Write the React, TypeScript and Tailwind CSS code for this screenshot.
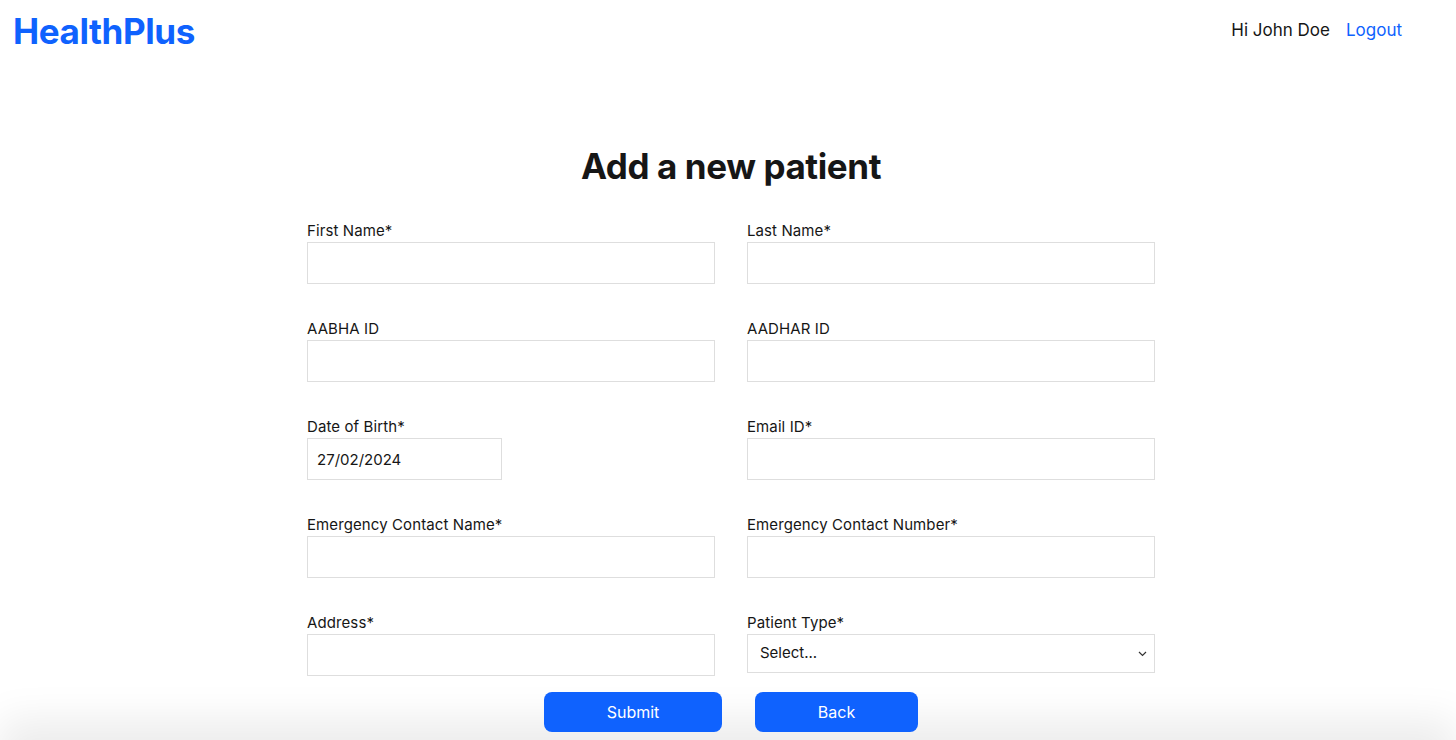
import { useState } from 'react';

const fields: { label: string; name: string }[][] = [
  [
    { label: 'First Name*', name: 'firstName' },
    { label: 'Last Name*', name: 'lastName' },
  ],
  [
    { label: 'AABHA ID', name: 'aabha' },
    { label: 'AADHAR ID', name: 'aadhar' },
  ],
];

function Field({ label, children }: { label: string; children: React.ReactNode }) {
  return (
    <div className="flex flex-col">
      <label className="text-[15px] leading-5 pt-[1px] text-[#161616] tracking-[0.1px]">{label}</label>
      <div className="mt-[1px]">{children}</div>
    </div>
  );
}

const inputCls =
  'w-full h-[42px] border border-[#dedede] bg-white px-[9px] text-[15px] text-[#161616] outline-none';

export default function App() {
  const [dob, setDob] = useState('27/02/2024');

  return (
    <div className="min-h-screen bg-white font-['Inter',sans-serif] overflow-hidden">
      <header className="h-[62px] flex items-center justify-between pl-[13px] pr-[54px]">
        <span className="text-[35px] font-bold text-[#0f62fe] tracking-[-0.4px]">HealthPlus</span>
        <div className="flex items-center gap-4 text-[17px]">
          <span className="text-[#161616]">Hi John Doe</span>
          <a href="#" className="text-[#0f62fe]">Logout</a>
        </div>
      </header>

      <main className="pl-[6px] pt-[83px]">
        <h1 className="text-center text-[35px] leading-[42px] font-bold text-[#161616] tracking-[-0.4px]">
          Add a new patient
        </h1>

        <form className="mx-auto w-[848px] mt-[33px]" onSubmit={(e) => e.preventDefault()}>
          <div className="grid grid-cols-2 gap-x-8 gap-y-[34px]">
            {fields.flat().map((f) => (
              <Field key={f.name} label={f.label}>
                <input className={inputCls} name={f.name} />
              </Field>
            ))}

            <Field label="Date of Birth*">
              <input
                className={inputCls + ' !w-[195px]'}
                value={dob}
                onChange={(e) => setDob(e.target.value)}
              />
            </Field>
            <Field label="Email ID*">
              <input className={inputCls} name="email" />
            </Field>

            <Field label="Emergency Contact Name*">
              <input className={inputCls} name="ecName" />
            </Field>
            <Field label="Emergency Contact Number*">
              <input className={inputCls} name="ecNumber" />
            </Field>

            <Field label="Address*">
              <input className={inputCls} name="address" />
            </Field>
            <Field label="Patient Type*">
              <div className="relative">
                <select
                  className="w-full h-[39px] appearance-none border border-[#dedede] bg-white pl-3 pr-8 text-[15px] text-[#161616] outline-none"
                  defaultValue=""
                >
                  <option value="">Select...</option>
                  <option value="in">In-patient</option>
                  <option value="out">Out-patient</option>
                </select>
                <svg
                  className="pointer-events-none absolute right-[8px] top-1/2 -translate-y-1/2"
                  width="9"
                  height="6"
                  viewBox="0 0 9 6"
                  fill="none"
                >
                  <path d="M1 1l3.5 3.5L8 1" stroke="#333" strokeWidth="1.2" />
                </svg>
              </div>
            </Field>
          </div>

          <div className="mt-4 flex justify-center gap-[33px]">
            <button type="submit" className="w-[178px] h-10 rounded-lg bg-[#0f62fe] text-white text-[16px]">
              Submit
            </button>
            <button type="button" className="w-[163px] h-10 rounded-lg bg-[#0f62fe] text-white text-[16px]">
              Back
            </button>
          </div>
        </form>
      </main>

      <footer className="mx-5 mt-2 h-20 bg-[#ececec] shadow-[0_0_40px_20px_rgba(0,0,0,0.08)]" />
    </div>
  );
}
